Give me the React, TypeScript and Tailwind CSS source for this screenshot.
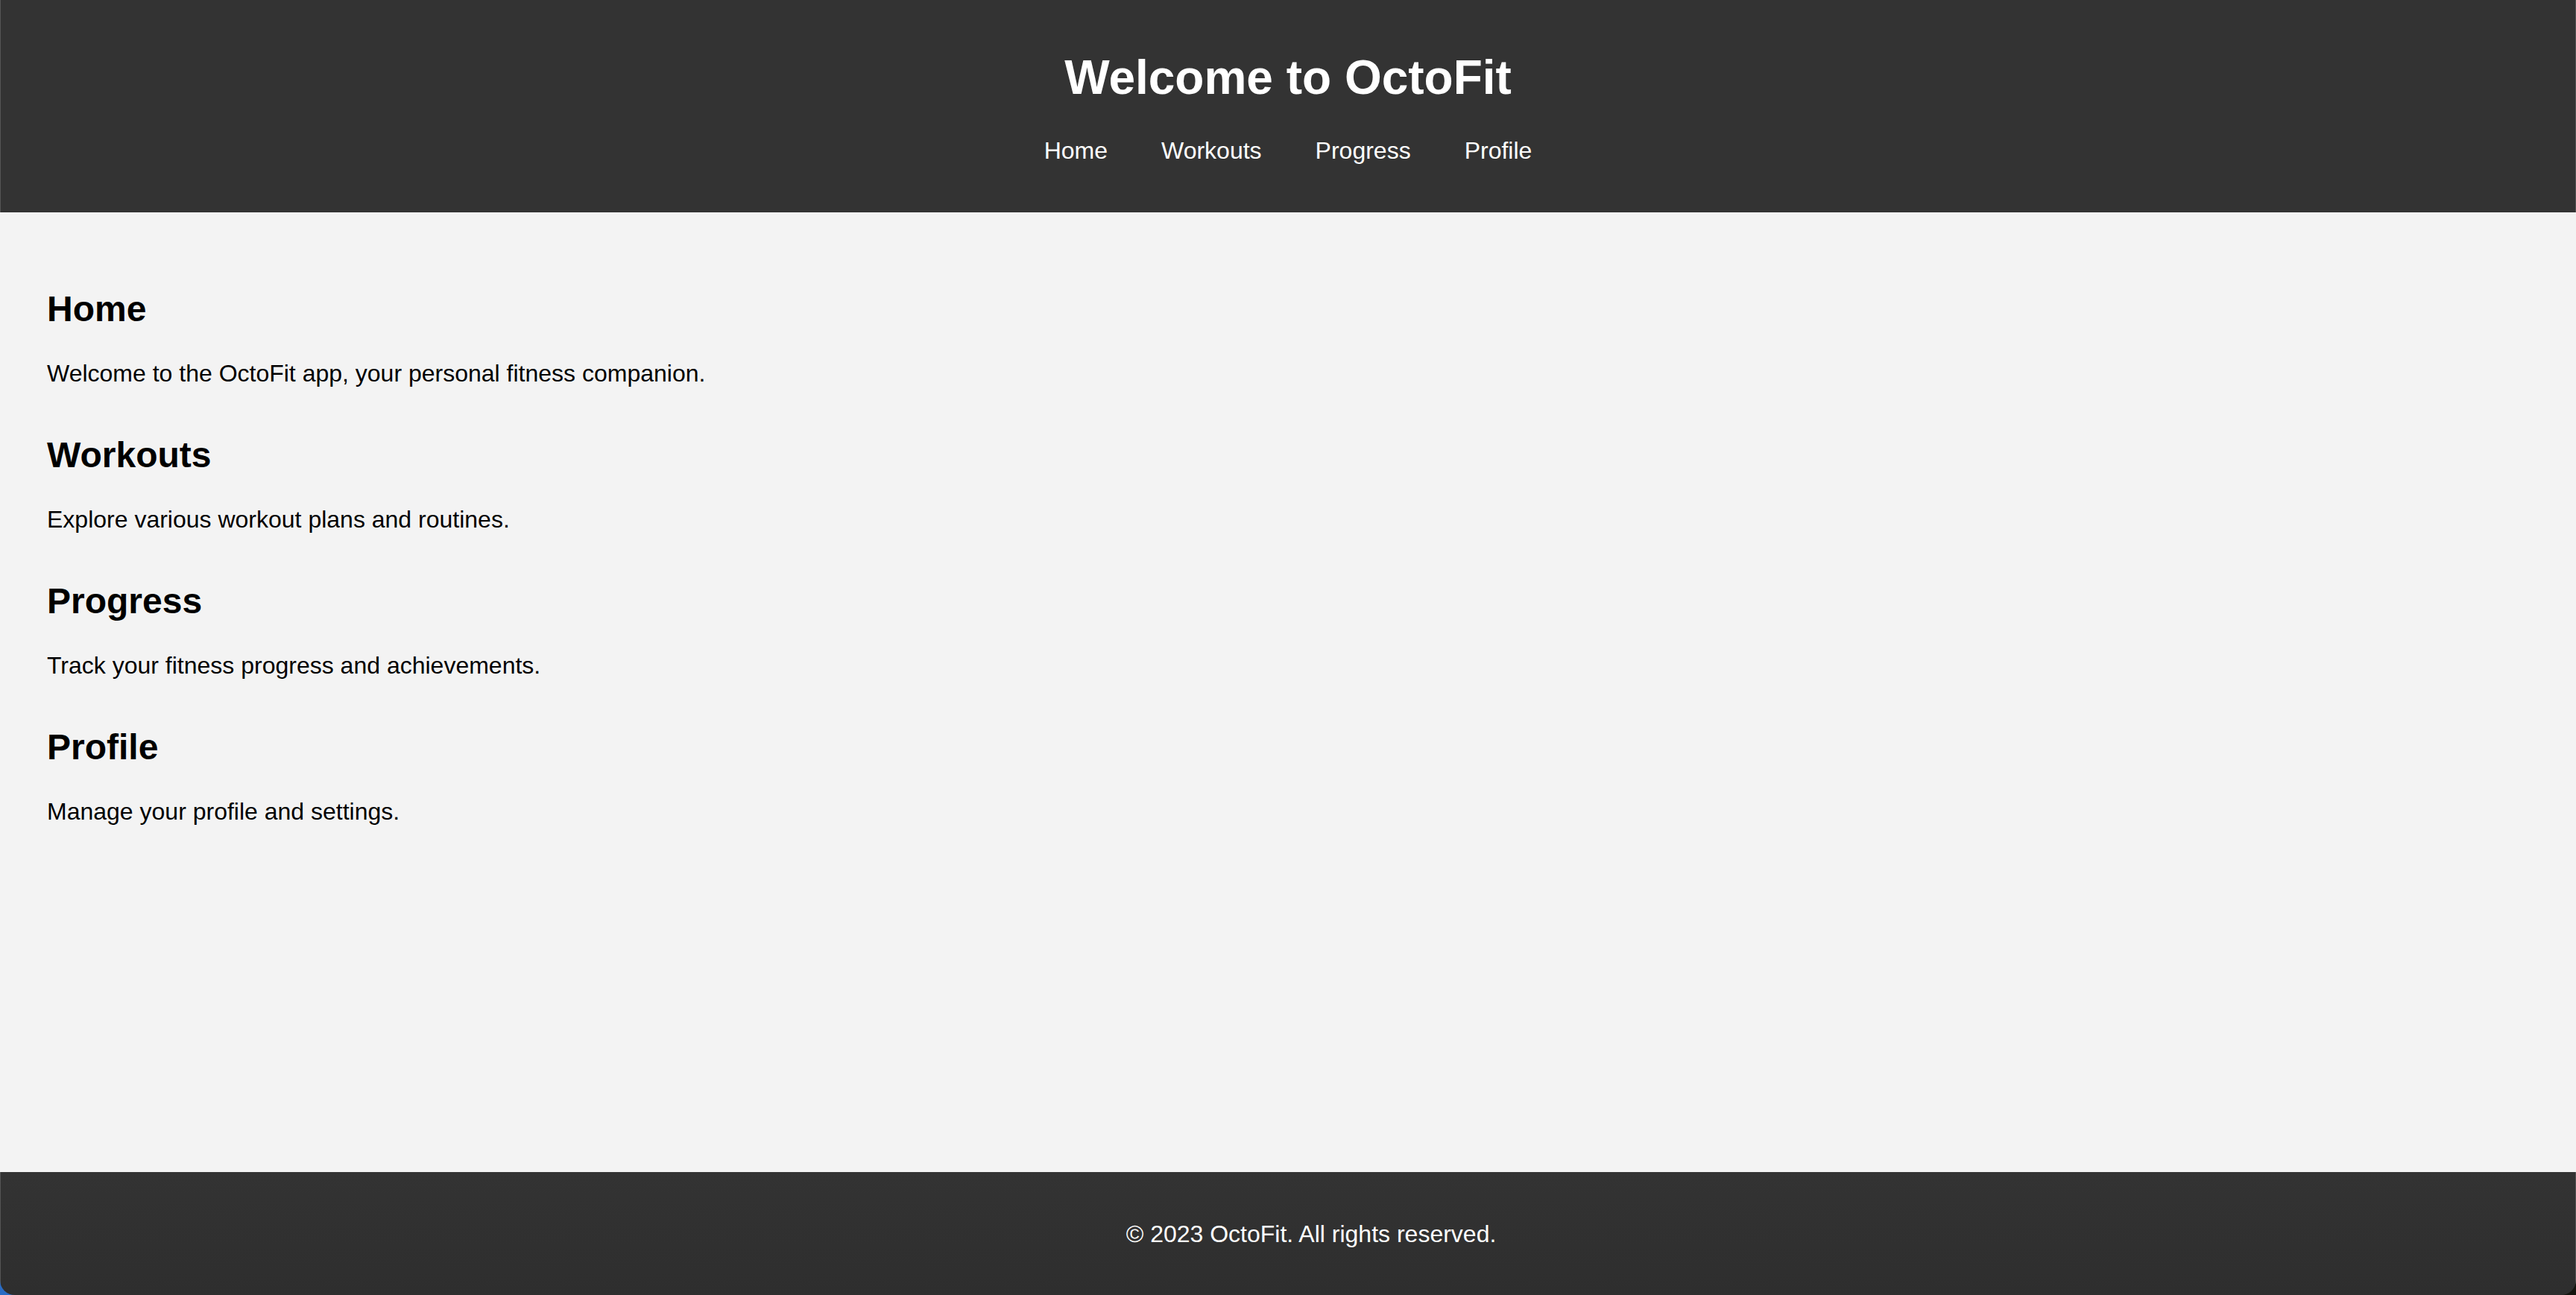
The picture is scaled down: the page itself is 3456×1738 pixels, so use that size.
const NAV_LINKS = ["Home", "Workouts", "Progress", "Profile"];

const SECTIONS = [
  { title: "Home", text: "Welcome to the OctoFit app, your personal fitness companion." },
  { title: "Workouts", text: "Explore various workout plans and routines." },
  { title: "Progress", text: "Track your fitness progress and achievements." },
  { title: "Profile", text: "Manage your profile and settings." },
];

export default function App() {
  return (
    <div className="h-[1738px] w-full bg-gradient-to-r from-[#2a6cc4] via-[#1d2a3a] to-[#15150f] font-['Liberation_Sans',Arial,sans-serif]">
      <div className="flex h-full flex-col overflow-hidden rounded-b-[20px]">
        <header className="flex h-[285px] flex-col items-center border-x border-[#555] bg-[#333333] pt-[72px] text-white">
          <h1 className="text-[64px] font-bold leading-none">Welcome to OctoFit</h1>
          <nav className="mt-[50px]">
            <ul className="flex gap-[72px]">
              {NAV_LINKS.map((link) => (
                <li key={link}>
                  <a href="#" className="text-[32px] leading-none text-white">
                    {link}
                  </a>
                </li>
              ))}
            </ul>
          </nav>
        </header>

        <main className="flex-1 bg-[#f3f3f3] px-[63px] pt-[106px] text-black">
          {SECTIONS.map((section) => (
            <section key={section.title} className="mb-[70px]">
              <h2 className="text-[48px] font-bold leading-none">{section.title}</h2>
              <p className="mt-[46px] text-[32px] leading-none">{section.text}</p>
            </section>
          ))}
        </main>

        <footer className="flex h-[165px] items-center justify-center border-x border-[#555] bg-gradient-to-b from-[#333333] to-[#2e2e2e] pl-[62px] text-white">
          <p className="text-[32px] leading-none">© 2023 OctoFit. All rights reserved.</p>
        </footer>
      </div>
    </div>
  );
}
